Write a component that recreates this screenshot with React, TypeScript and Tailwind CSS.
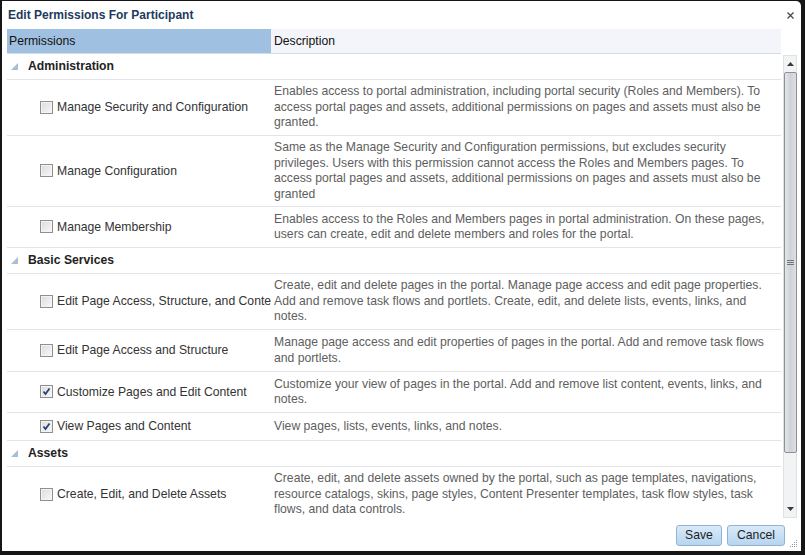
import React from 'react';

type Row =
  | { kind: 'group'; label: string; h: string }
  | { kind: 'perm'; label: string; checked: boolean; lines: string[]; h: string };

const rows: Row[] = [
  { kind: 'group', label: 'Administration', h: 'h-[26px]' },
  {
    kind: 'perm',
    label: 'Manage Security and Configuration',
    checked: false,
    h: 'h-[56px]',
    lines: [
      'Enables access to portal administration, including portal security (Roles and Members). To',
      'access portal pages and assets, additional permissions on pages and assets must also be',
      'granted.',
    ],
  },
  {
    kind: 'perm',
    label: 'Manage Configuration',
    checked: false,
    h: 'h-[71px]',
    lines: [
      'Same as the Manage Security and Configuration permissions, but excludes security',
      'privileges. Users with this permission cannot access the Roles and Members pages. To',
      'access portal pages and assets, additional permissions on pages and assets must also be',
      'granted',
    ],
  },
  {
    kind: 'perm',
    label: 'Manage Membership',
    checked: false,
    h: 'h-[41px]',
    lines: [
      'Enables access to the Roles and Members pages in portal administration. On these pages,',
      'users can create, edit and delete members and roles for the portal.',
    ],
  },
  { kind: 'group', label: 'Basic Services', h: 'h-[26px]' },
  {
    kind: 'perm',
    label: 'Edit Page Access, Structure, and Content',
    checked: false,
    h: 'h-[56px]',
    lines: [
      'Create, edit and delete pages in the portal. Manage page access and edit page properties.',
      'Add and remove task flows and portlets. Create, edit, and delete lists, events, links, and',
      'notes.',
    ],
  },
  {
    kind: 'perm',
    label: 'Edit Page Access and Structure',
    checked: false,
    h: 'h-[42px]',
    lines: [
      'Manage page access and edit properties of pages in the portal. Add and remove task flows',
      'and portlets.',
    ],
  },
  {
    kind: 'perm',
    label: 'Customize Pages and Edit Content',
    checked: true,
    h: 'h-[41px]',
    lines: [
      'Customize your view of pages in the portal. Add and remove list content, events, links, and',
      'notes.',
    ],
  },
  {
    kind: 'perm',
    label: 'View Pages and Content',
    checked: true,
    h: 'h-[28px]',
    lines: ['View pages, lists, events, links, and notes.'],
  },
  { kind: 'group', label: 'Assets', h: 'h-[26px]' },
  {
    kind: 'perm',
    label: 'Create, Edit, and Delete Assets',
    checked: false,
    h: 'h-[56px]',
    lines: [
      'Create, edit, and delete assets owned by the portal, such as page templates, navigations,',
      'resource catalogs, skins, page styles, Content Presenter templates, task flow styles, task',
      'flows, and data controls.',
    ],
  },
];

const Checkbox = ({ checked }: { checked: boolean }) => (
  <div className="w-[13px] h-[13px] shrink-0 border border-[#8e8f8f] bg-gradient-to-br from-[#dcdcdc] to-[#f8f8f8] shadow-[inset_0_0_0_1px_#f4f4f4] flex items-center justify-center">
    {checked && (
      <svg width="9" height="9" viewBox="0 0 9 9">
        <path d="M1.5 4.5 L3.5 7 L7.5 1.5" fill="none" stroke="#2b3f7a" strokeWidth="1.8" />
      </svg>
    )}
  </div>
);

const Triangle = () => (
  <svg width="7" height="7" viewBox="0 0 7 7" className="shrink-0">
    <polygon points="7,0 7,7 0,7" fill="#a9bdd3" />
  </svg>
);

const Scrollbar = () => (
  <div className="w-[14px] h-[463px] mt-[1px] bg-[#f2f3f4] border border-[#dfe1e3] flex flex-col items-center">
    <div className="h-[16px] w-full flex items-center justify-center">
      <svg width="7" height="4" viewBox="0 0 7 4">
        <polygon points="3.5,0 7,4 0,4" fill="#3a3a3a" />
      </svg>
    </div>
    <div className="w-[13px] h-[381px] border border-[#8d9196] rounded-[2px] bg-gradient-to-r from-[#e3e6e9] via-[#cfd3d8] to-[#dde0e3] flex items-center justify-center">
      <div className="flex flex-col gap-[1px]">
        <div className="w-[7px] h-[1px] bg-[#6f757b]" />
        <div className="w-[7px] h-[1px] bg-[#6f757b]" />
        <div className="w-[7px] h-[1px] bg-[#6f757b]" />
      </div>
    </div>
    <div className="flex-1" />
    <div className="h-[16px] w-full flex items-center justify-center">
      <svg width="7" height="4" viewBox="0 0 7 4">
        <polygon points="0,0 7,0 3.5,4" fill="#3a3a3a" />
      </svg>
    </div>
  </div>
);

const Button = ({ label, w }: { label: string; w: string }) => (
  <button
    className={`${w} h-[21px] rounded-[3px] border border-[#8fb4d6] bg-gradient-to-b from-[#d9eaf8] to-[#b7d5f0] text-[12.2px] text-[#1e1e1e] flex items-center justify-center`}
  >
    {label}
  </button>
);

export default function App() {
  return (
    <div
      className="w-[805px] h-[555px] bg-[#161616] pt-[1px] pl-[2px] pr-[4px] pb-[4px]"
      style={{ fontFamily: '"Liberation Sans", Arial, sans-serif' }}
    >
      <div className="h-full bg-white rounded-tr-[5px] flex flex-col">
        {/* title */}
        <div className="h-[28px] shrink-0 flex items-center justify-between pl-[6px] pr-[6px]">
          <span className="text-[12px] font-bold text-[#1d3b5e]">Edit Permissions For Participant</span>
          <svg width="7" height="7" viewBox="0 0 7 7" className="mt-[1px] mr-[1px]">
            <path d="M0.5 0.5 L6.5 6.5 M6.5 0.5 L0.5 6.5" stroke="#444" strokeWidth="1.2" />
          </svg>
        </div>

        {/* header */}
        <div className="pl-[5px] shrink-0">
          <div className="w-[774px] h-[25px] flex border-b border-[#d6dce6] text-[12.2px] text-[#111]">
            <div className="w-[264px] bg-[#a0c0e1] pl-[2px] flex items-center">Permissions</div>
            <div className="flex-1 bg-[#f3f5fb] pl-[3px] flex items-center">Description</div>
          </div>
        </div>

        {/* body */}
        <div className="h-[467px] shrink-0 pl-[5px] pr-[4px] flex gap-[2px]">
          <div className="w-[774px] overflow-hidden">
            {rows.map((r, i) =>
              r.kind === 'group' ? (
                <div key={i} className={`${r.h} flex items-center border-b border-[#e3e4ea] pl-[4px]`}>
                  <Triangle />
                  <span className="ml-[10px] text-[12.2px] font-bold text-[#222]">{r.label}</span>
                </div>
              ) : (
                <div key={i} className={`${r.h} shrink-0 flex items-center border-b border-[#e3e4ea]`}>
                  <div className="w-[264px] shrink-0 overflow-hidden whitespace-nowrap flex items-center pl-[33px] text-[12.2px] text-[#333]">
                    <Checkbox checked={r.checked} />
                    <span className="ml-[4px]">{r.label}</span>
                  </div>
                  <div className="pl-[3px] text-[12.2px] leading-[15.5px] text-[#5e5e5e] whitespace-nowrap">
                    {r.lines.map((l, j) => (
                      <div key={j}>{l}</div>
                    ))}
                  </div>
                </div>
              )
            )}
          </div>
          <Scrollbar />
        </div>

        {/* footer */}
        <div className="flex-1 flex items-start justify-end pt-[4px] pr-[16px] gap-[5px] relative">
          <Button label="Save" w="w-[46px]" />
          <Button label="Cancel" w="w-[58px]" />
          <svg width="9" height="9" viewBox="0 0 9 9" className="absolute right-[3px] bottom-[3px]">
            {[
              [7, 1],
              [5, 3], [7, 3],
              [3, 5], [5, 5], [7, 5],
              [1, 7], [3, 7], [5, 7], [7, 7],
            ].map(([x, y], k) => (
              <rect key={k} x={x} y={y} width="1" height="1" fill="#9a9a9a" />
            ))}
          </svg>
        </div>
      </div>
    </div>
  );
}
